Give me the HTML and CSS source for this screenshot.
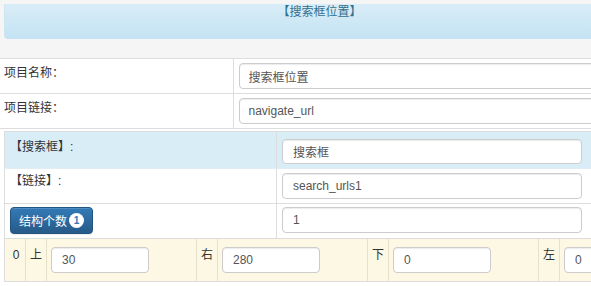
FILE: index.html
```html
<!DOCTYPE html>
<html>
<head>
  <meta charset="utf-8">
  <title>搜索框位置</title>
  <link rel="stylesheet" href="styles.css">
</head>
<body>
  <div class="page">
    <div class="page-top">
      <div class="panel-heading">【搜索框位置】</div>
    </div>

    <table class="form-table">
      <colgroup>
        <col class="col-label">
        <col>
      </colgroup>
      <tr>
        <td class="label">项目名称：</td>
        <td><input class="form-control" type="text" value="搜索框位置"></td>
      </tr>
      <tr>
        <td class="label">项目链接：</td>
        <td><input class="form-control" type="text" value="navigate_url"></td>
      </tr>
      <tr>
        <td colspan="2" class="nested-cell">
          <table class="item-table">
            <colgroup>
              <col class="col-item">
              <col>
            </colgroup>
            <tr class="row-info">
              <td class="label">【搜索框】:</td>
              <td><input class="form-control fixed" type="text" value="搜索框"></td>
            </tr>
            <tr class="row-link">
              <td class="label">【链接】:</td>
              <td><input class="form-control fixed" type="text" value="search_urls1"></td>
            </tr>
            <tr class="row-count">
              <td>
                <button class="btn-primary" type="button">结构个数<span class="badge">1</span></button>
              </td>
              <td><input class="form-control fixed" type="text" value="1"></td>
            </tr>
            <tr class="row-warning">
              <td colspan="2" class="pos-cell">
                <div class="pos-row">
                  <div class="pos-label pos-index">0</div>
                  <div class="pos-label">上</div>
                  <div class="pos-field"><input class="form-control small" type="text" value="30"></div>
                  <div class="pos-label">右</div>
                  <div class="pos-field"><input class="form-control small" type="text" value="280"></div>
                  <div class="pos-label">下</div>
                  <div class="pos-field"><input class="form-control small" type="text" value="0"></div>
                  <div class="pos-label">左</div>
                  <div class="pos-field"><input class="form-control small" type="text" value="0"></div>
                </div>
              </td>
            </tr>
          </table>
        </td>
      </tr>
    </table>
  </div>
</body>
</html>
```

FILE: styles.css
```css
html, body {
  overflow: hidden;
}

body {
  margin: 0;
  font-family: 'Liberation Sans', 'Noto Sans CJK SC', sans-serif;
  font-size: 12px;
  color: #333333;
  background-color: #ffffff;
}

.page {
  width: 720px;
}

.page-top {
  background-color: #f5f5f5;
  padding: 4px 0 19px 4px;
}

.panel-heading {
  width: 630px;
  height: 35px;
  box-sizing: border-box;
  padding-top: 0;
  line-height: 16px;
  text-align: center;
  color: #31708f;
  background-image: linear-gradient(to bottom, #d9edf7 0%, #c4e3f3 100%);
  border-left: 1px solid #cde6f2;
  border-bottom-left-radius: 4px;
}

table {
  border-collapse: collapse;
  border-spacing: 0;
  table-layout: fixed;
}

.form-table {
  width: 720px;
  border-top: 1px solid #dddddd;
}

.form-table > tbody > tr > td {
  padding: 4px 5px 4px 5px;
  border-bottom: 1px solid #dddddd;
  vertical-align: top;
}

.form-table > tbody > tr > td + td {
  border-left: 1px solid #dddddd;
}

.col-label {
  width: 233px;
}

.form-table > tbody > tr > td.label {
  padding-left: 4px;
  line-height: 20px;
}

.form-table > tbody > tr > td.nested-cell {
  padding: 2px 0 0 4px;
  border-bottom: none;
}

.item-table {
  width: 716px;
  border: 1px solid #dddddd;
}

.col-item {
  width: 272px;
}

.item-table td {
  padding: 4px 5px;
  border-bottom: 1px solid #dddddd;
  vertical-align: top;
}

.item-table td + td {
  border-left: 1px solid #dddddd;
}

.item-table td.label {
  line-height: 17px;
}

.row-info td {
  background-color: #d9edf7;
  border-bottom-color: #e3edf1;
}

.row-info td {
  padding-top: 7px;
}

.row-count td {
  padding-top: 3px;
}

.form-control {
  display: block;
  width: 100%;
  height: 26px;
  box-sizing: border-box;
  padding: 0 9px;
  font-family: inherit;
  font-size: 12px;
  color: #555555;
  background-color: #ffffff;
  border: 1px solid #cccccc;
  border-radius: 4px;
  box-shadow: inset 0 1px 1px rgba(0, 0, 0, 0.075);
}

.form-control.fixed {
  width: 300px;
  padding: 0 10px;
}

.row-info .form-control {
  height: 25px;
}

.btn-primary {
  display: inline-flex;
  align-items: center;
  gap: 2px;
  height: 27px;
  padding: 0 8px;
  font-family: inherit;
  font-size: 12px;
  color: #ffffff;
  background-image: linear-gradient(to bottom, #337ab7 0%, #265a88 100%);
  border: 1px solid #245580;
  border-radius: 4px;
  box-shadow: inset 0 1px 0 rgba(255, 255, 255, 0.15), 0 1px 1px rgba(0, 0, 0, 0.075);
  cursor: pointer;
}

.badge {
  display: inline-flex;
  align-items: center;
  justify-content: center;
  width: 15px;
  height: 15px;
  border-radius: 8px;
  font-size: 10px;
  font-weight: bold;
  color: #337ab7;
  background-color: #ffffff;
}

.item-table td.pos-cell {
  padding: 0;
  border-bottom: none;
  background-color: #fcf8e3;
}

.pos-row {
  display: flex;
  height: 42px;
}

.pos-label {
  width: 21px;
  flex-shrink: 0;
  box-sizing: border-box;
  padding-top: 8px;
  line-height: 17px;
  text-align: center;
  border-right: 1px solid #e6e1cb;
}

.pos-index {
  padding-left: 2px;
}

.pos-field {
  width: 150px;
  flex-shrink: 0;
  box-sizing: border-box;
  padding: 8px 0 0 4px;
  border-right: 1px solid #e6e1cb;
}

.form-control.small {
  width: 98px;
  padding: 0 10px;
}
```
